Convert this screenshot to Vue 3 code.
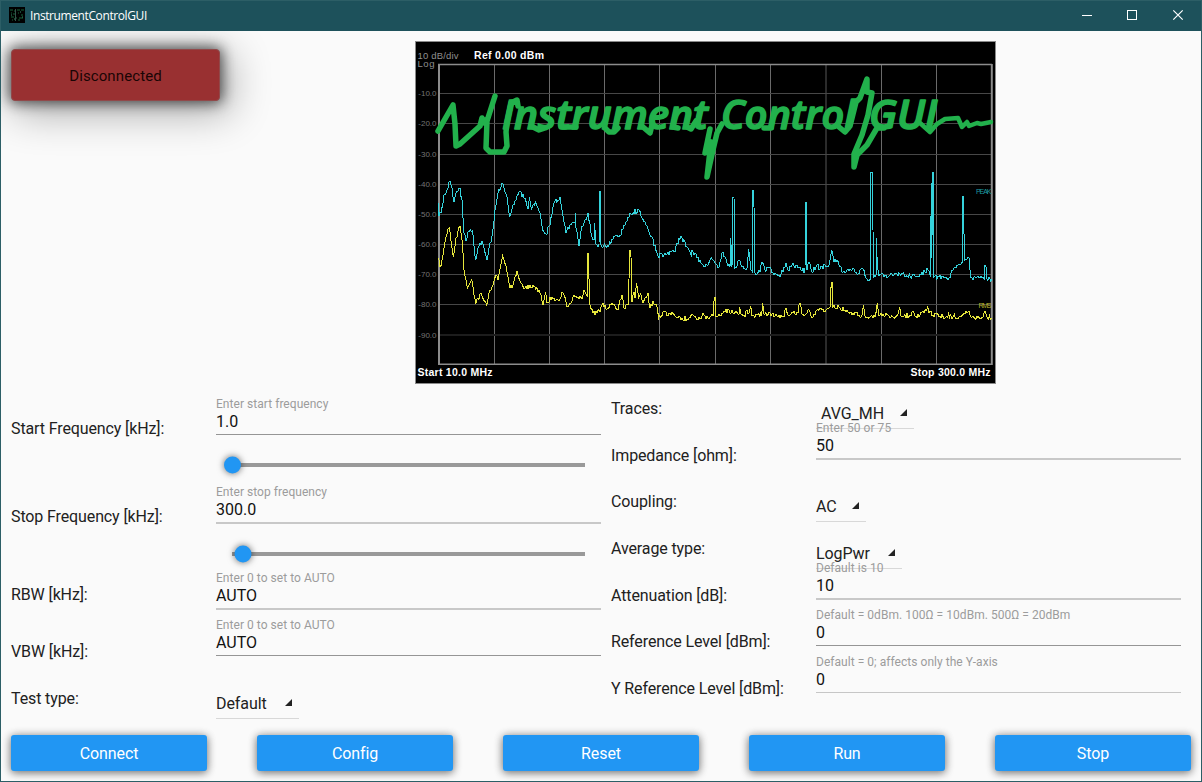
<script setup>
const verticals = [494.5, 549.5, 604.5, 659.5, 715.5, 770.5, 826, 881.5, 936.5]
const horizontals = [93.5, 123.5, 154.5, 184.5, 214.5, 244.5, 274.5, 304.5, 335]

const peak = `438,203 439,216 441,213 444,195 446,193 450,181 452,188 454,202 456.5,192 460,188 462,200 464,233 466,241 468,232 472.5,231 475.5,260 479,246 482,241 484.5,251 487,260 490,243 492,236 495,210 498.5,190 502,183 506.5,195 509.5,216 513,205 520,192 524,198 528,209 529.5,197 531.5,210 535.5,202 540,213 542.5,230 546,234 550,225 554,203 560,197 562.5,212 566,233 570,225 575,223 575.5,213 576,228 579,246 581.5,227 585,220 588,213 591,233 594,240 594.5,223 596,244 599,245 599.5,191 600.6,191 601,245 606.5,247 613,239 620,235 625,225 630,213 639,210 645,222 650,235 655,245 658,256 667,254 675,252 677,243 682,238 687,247 691.5,257 692,250 697,258 703,265 708,265 711.5,258 715,263 718,268 723,252 727,263 730,267 730.7,238 732,267 733,197 734,197 735,268 739,260 742,267 747,268 748.7,249 751,270 752.7,272 753,190 753.8,190 754.3,230 755,273 760,272 762,262 765,270 770,267 773,273 778,276 783,272 786,263 788,270 792,265 800,267 805,272 805.3,202 806.3,202 807,270 809,262 812,272 817,265 820,269 825,265 829,265 831.7,250 834,262 837,260 840,267 843,272 853,268 858,274 863,269 866,278 870.3,279 871,172 872,172 873,230 873.7,277 876,277 876.3,238 877.3,265 879,276 897,274 917,277 925,272 928,270 930.5,277 931.3,183 931.8,258 932.6,172 933.4,172 934,277 950,278 952,270 958,265 962.3,262 963,196 963.7,213 964.4,260 969,258 971,278 980,278 984.3,279 984.7,265 985.9,265 986.7,278 991.7,279`
const rms = `438,258 440,267 442,260 445.7,238 449.3,228 453.3,257 456,238 460,226 462,240 464,270 467.3,288 471.7,280 475.7,304 481,293 486.7,305 490,290 493,285 496.7,275 498,280 502.7,256 506.7,270 510,288 513,285 517,271 520.7,283 525,288 535,287 540,293 543,305 545.7,292 547,303 552,297 558,300 563,293 567,307 573,297 582,299 584,290 587.3,297 587.6,253 588.5,253 589.5,303 593,313 600,312 603,303 607,309 610,304 613,305 618,310 622,295 624,308 628,305 630,250 631,257 632,302 634,292 635,298 636.5,283 638.5,298 640.5,293 643,303 648,293 650,308 653,301 657,307 658.7,318 665,312 668,316 672,312 675,316 687,319 694,316 700,319 703,313 706,319 713,316 714.3,297 715.3,297 716,317 723,313 729,310 733,313 739,314 739.7,307 741,314 745,317 747,310 749,313 750.7,306 752,316 761.7,315 762.7,303 764,314 772,314 778,317 784,317 786,308 788,315 792,312 798,313 799.3,303 800.5,303 802,314 805,315 808,310 811,316 815,315 818,309 825,312 830,307 831.3,282 832.2,282 833,307 840,308 853,313 862,315 863.5,305 865,316 875,317 877.3,303 879,316 896.7,316 899.7,307 901,316 910,315 912,312 915,316 924,313 927.7,306 929,313 940,316 960,316 967,313 969,311 972,317 978,318 983,317 985,311 987,317 991.7,318`

// Interpolates the key points and adds a small repeatable ripple of receiver noise.
function trace(source, seed) {
  const pts = source.split(' ').map((p) => p.split(',').map(Number))
  let s = seed
  const rand = () => {
    s = (s * 16807) % 2147483647
    return s / 2147483647 - 0.5
  }
  const out = []
  pts.forEach(([x, y], i) => {
    out.push(`${x},${y}`)
    const next = pts[i + 1]
    if (!next) return
    const n = Math.floor((next[0] - x) / 0.95)
    for (let k = 1; k < n; k++) {
      const t = k / n
      out.push(`${(x + (next[0] - x) * t).toFixed(1)},${(y + (next[1] - y) * t + rand() * 5).toFixed(1)}`)
    }
  })
  return out.join(' ')
}
const peakTrace = trace(peak, 917)
const rmsTrace = trace(rms, 4211)

const leftRows = [
  { id: 'start', label: 'Start Frequency [kHz]:', hint: 'Enter start frequency', value: '1.0', line: 'dark', slider: 'at-min' },
  { id: 'stop', label: 'Stop Frequency [kHz]:', hint: 'Enter stop frequency', value: '300.0', line: 'wide', slider: 'at-low' },
  { id: 'rbw', label: 'RBW [kHz]:', hint: 'Enter 0 to set to AUTO', value: 'AUTO', line: 'wide' },
  { id: 'vbw', label: 'VBW [kHz]:', hint: 'Enter 0 to set to AUTO', value: 'AUTO', line: 'dark' },
  { id: 'test', label: 'Test type:', option: 'Default' },
]
const rightRows = [
  { id: 'traces', label: 'Traces:', option: 'AVG_MH' },
  { id: 'imp', label: 'Impedance [ohm]:', hint: 'Enter 50 or 75', value: '50', line: 'wide' },
  { id: 'coup', label: 'Coupling:', option: 'AC' },
  { id: 'avg', label: 'Average type:', option: 'LogPwr' },
  { id: 'att', label: 'Attenuation [dB]:', hint: 'Default is 10', value: '10', line: 'wide' },
  { id: 'ref', label: 'Reference Level [dBm]:', hint: 'Default = 0dBm. 100Ω = 10dBm. 500Ω = 20dBm', value: '0', line: 'dark' },
  { id: 'yref', label: 'Y Reference Level [dBm]:', hint: 'Default = 0; affects only the Y-axis', value: '0', line: 'light' },
]
const columns = [
  { side: 'left', rows: leftRows },
  { side: 'right', rows: rightRows },
]
const actions = ['Connect', 'Config', 'Reset', 'Run', 'Stop']
</script>

<template>
  <div class="window">
    <header class="titlebar">
      <svg class="app-icon" viewBox="0 0 16 16">
        <rect width="16" height="16" fill="#000" />
        <path d="M1 3h3M5 4h2M8 3h3M12 3h3M2 6h1M4 7h2M9 6h1M12 8h2M2 10h3M7 11h1M10 11h4M3 13h1M9 13h2" stroke="#17653a" fill="none" />
        <path d="M6.500 2v12" stroke="#35524a" fill="none" />
        <path d="M2 8h1M11 5h1M5 12h1M13 10h1" stroke="#38896b" />
      </svg>
      <span class="title">InstrumentControlGUI</span>
      <svg class="controls" viewBox="0 0 138 30" fill="none" stroke="#fff">
        <path d="M18 15.500h10" />
        <rect x="63.500" y="10.500" width="9" height="9" />
        <path d="M109.300 10.300l9.400 9.400M118.700 10.300l-9.400 9.400" stroke-width="1.200" />
      </svg>
    </header>

    <section class="top">
      <button class="status">Disconnected</button>
      <svg class="screen" viewBox="415 41 581 343">
        <rect x="415.500" y="41.500" width="580" height="342" fill="#000" stroke="#8a8a8a" />
        <g stroke="#6a6a6a">
          <path v-for="x in verticals" :key="x" :d="`M${x} 65V364`" :class="{ dim: x === 826 }" />
        </g>
        <g stroke="#474747">
          <path v-for="y in horizontals" :key="y" :d="`M440 ${y}H992`" :class="{ faint: y === 335 }" />
        </g>
        <path d="M438 64.500H992" stroke="#8c8c8c" stroke-width="1.500" />
        <path d="M439 64V365M991.800 64V365" stroke="#8c8c8c" stroke-width="2" />
        <path d="M438 364.300H992" stroke="#8c8c8c" stroke-width="1.500" />

        <g class="axis">
          <text x="417.500" y="58.500" textLength="41" class="unit">10 dB/div</text>
          <text x="417.500" y="66.500" textLength="17" class="unit">Log</text>
          <text v-for="(y, i) in horizontals" :key="y" x="436.500" :y="y + 2.7" text-anchor="end">-{{ i + 1 }}0.0</text>
        </g>
        <g class="caption">
          <text x="474" y="59" textLength="70">Ref 0.00 dBm</text>
          <text x="417.500" y="376" textLength="75">Start 10.0 MHz</text>
          <text x="910.500" y="376" textLength="80">Stop 300.0 MHz</text>
        </g>

        <polyline :points="peakTrace" class="trace" stroke="#35d3dc" />
        <polyline :points="rmsTrace" class="trace" stroke="#e6e63c" />
        <text x="976" y="193.500" class="tag" fill="#1f9da3" textLength="15.500">PEAK</text>
        <text x="978.500" y="308" class="tag" fill="#b3b32c" textLength="13">RMS</text>

        <g class="logo">
          <text x="502" y="129" textLength="206" lengthAdjust="spacingAndGlyphs">Instrument</text>
          <text x="721" y="129" textLength="134" lengthAdjust="spacingAndGlyphs">Control</text>
          <text x="869" y="129" textLength="68" lengthAdjust="spacingAndGlyphs">GUI</text>
          <path d="M438 131L453 105L455 124L456 146L460 144L480 126L482 118L484 123L488 118L495 96L487 121L486 148L490 152L504 152L507 146L506 132L507 122L511 103L517 100L518 106" />
          <path d="M533 127L539 130L545 128M561 127H576M605 128L609 132H614L618 128M643 127L650 133L652 125M673 127L678 128M687 127L691 129L696 121" />
          <path d="M710 129L705 153L711 142L707 177L713 150L717 133L722 124" />
          <path d="M764 128H771M839 127L845 132L850 126L856 102L860 98L867 79L867 92L872 93L868 115L862 135L854 154L854 167L857 155L867 145L877 128H884" />
          <path d="M920 123L930 132L937 124L945 119L958 118L962 127L967 122L969 126L977 123L981 124L991 122" class="tail" />
        </g>
      </svg>
    </section>

    <main class="form">
      <div v-for="col in columns" :key="col.side" :class="['column', col.side]">
        <div v-for="row in col.rows" :key="row.id" :class="['row', row.id]">
          <label class="label">{{ row.label }}</label>
          <div v-if="row.option" class="spinner">
            <span>{{ row.option }}</span>
            <svg class="caret" viewBox="0 0 8 8"><path d="M8 0V8H0Z" fill="#222" /></svg>
          </div>
          <div v-else class="field">
            <div class="hint">{{ row.hint }}</div>
            <div :class="['value', row.line]">{{ row.value }}</div>
            <div v-if="row.slider" :class="['slider', row.slider]">
              <div class="knob"></div>
            </div>
          </div>
        </div>
      </div>
    </main>

    <footer class="actions">
      <button v-for="name in actions" :key="name" class="action">{{ name }}</button>
    </footer>
  </div>
</template>

<style>
body {
  margin: 0;
  overflow: hidden;
}
</style>

<style scoped>
.window {
  box-sizing: border-box;
  width: 1202px;
  height: 782px;
  border: 1px solid #2c5e66;
  background: #fafafa;
  color: #212121;
  font: 16px/20px Roboto, sans-serif;
  overflow: hidden;
  display: flex;
  flex-direction: column;
}
.titlebar {
  position: relative;
  z-index: 1;
  flex: none;
  height: 30px;
  display: flex;
  align-items: center;
  background: #1d515b;
}
.app-icon {
  width: 16px;
  height: 16px;
  margin: -2px 0 0 8px;
}
.title {
  margin-left: 5px;
  color: #fff;
  font: 12px/16px "Open Sans", sans-serif;
  letter-spacing: -0.400px;
}
.controls {
  width: 138px;
  height: 30px;
  margin: -2px -1px 0 auto;
}
.top {
  flex: none;
  display: flex;
  align-items: flex-start;
  height: 354px;
}
.status {
  width: 209px;
  height: 52px;
  margin: 18px 0 0 10px;
  padding: 2px 0 0;
  border: 1px solid #91494a;
  border-radius: 4px;
  background: #993031;
  color: #1a0505;
  font: 15px/20px Roboto, sans-serif;
  letter-spacing: 0.100px;
  box-shadow: 0 0 14px 2px rgba(0, 0, 0, 0.65), 6px 8px 40px 4px rgba(0, 0, 0, 0.32);
}
.screen {
  width: 581px;
  height: 343px;
  margin: 10px 0 0 195px;
}
.dim {
  stroke: #2b2b2b;
  stroke-width: 2;
}
.faint {
  stroke: #1d1d1d;
  stroke-width: 2;
}
.axis {
  fill: #747474;
  font: 8px "Liberation Sans", sans-serif;
}
.unit {
  fill: #8f8f8f;
  font-size: 9.500px;
}
.caption {
  fill: #fff;
  font: bold 10.500px "Liberation Sans", sans-serif;
}
.trace {
  fill: none;
  stroke-width: 1;
  shape-rendering: crispEdges;
}
.tag {
  font: 7px "Liberation Sans", sans-serif;
}
.logo text {
  fill: #22b14c;
  stroke: #22b14c;
  stroke-width: 1.600px;
  stroke-linejoin: round;
  font: italic 600 40px "Open Sans", "Noto Sans", sans-serif;
}
.logo path {
  fill: none;
  stroke: #22b14c;
  stroke-width: 5.500;
  stroke-linejoin: round;
  stroke-linecap: round;
}
.logo .tail {
  stroke-width: 4.500;
}
.form {
  flex: none;
  display: flex;
  gap: 10px;
  height: 349px;
  padding-left: 10px;
}
.column.left {
  width: 590px;
  padding-top: 11px;
}
.column.right {
  width: 570px;
}
.row {
  display: grid;
  grid-template-columns: 205px 1fr;
  align-items: start;
}
.label {
  letter-spacing: -0.120px;
}
.right .row {
  height: 46.670px;
}
.right .label {
  padding-top: 14px;
}
.right .field {
  margin-top: -11px;
}
.right .imp .field,
.right .att .field {
  margin-top: -12px;
}
.right .spinner {
  margin-top: 15px;
}
.start {
  height: 88px;
}
.stop {
  height: 86px;
}
.rbw,
.vbw {
  height: 47px;
}
.start .label,
.stop .label {
  padding-top: 23px;
}
.rbw .label {
  padding-top: 15px;
}
.vbw .label,
.test .label {
  padding-top: 25px;
}
.hint {
  padding-top: 1px;
  color: #9c9c9c;
  font-size: 12px;
  line-height: 15px;
  letter-spacing: 0.040px;
  white-space: nowrap;
}
.value {
  height: 22px;
  line-height: 19px;
  color: #111;
  border-bottom: 1px solid #959595;
}
.value.wide {
  border-bottom: 2px solid #c8c8c8;
}
.value.light {
  border-bottom-color: #c6c6c6;
}
.slider {
  height: 4px;
  width: 353px;
  margin: 28px 0 0 16px;
  background: #999;
}
.knob {
  width: 17px;
  height: 17px;
  border-radius: 50%;
  background: #2196f3;
  box-shadow: 0 0 7px rgba(0, 0, 0, 0.6);
  transform: translate(-8px, -6.500px);
}
.slider.at-low {
  margin-top: 27.500px;
}
.at-low .knob {
  transform: translate(2.500px, -6.500px);
}
.spinner {
  display: flex;
  justify-content: space-between;
  align-items: center;
  width: 79px;
  height: 29px;
  padding-right: 7px;
  box-sizing: border-box;
  border-bottom: 1px solid #d8d8d8;
}
.spinner span {
  letter-spacing: -0.060px;
}
.caret {
  width: 7px;
  height: 7px;
  margin-bottom: 3px;
}
.test .spinner {
  width: 83px;
  margin-top: 26px;
}
.traces .spinner {
  width: 98px;
  padding-left: 5px;
}
.right .coup .spinner {
  width: 50px;
}
.right .avg .spinner {
  width: 86px;
}
.actions {
  flex: none;
  display: flex;
  gap: 50px;
  padding: 1px 10px 0;
}
.action {
  width: 196px;
  height: 36px;
  padding: 1px 0 0;
  border: 0;
  border-radius: 3px;
  background: #2196f3;
  color: #fff;
  font: 16px/20px Roboto, sans-serif;
  letter-spacing: -0.100px;
  box-shadow: 0 2px 8px rgba(0, 0, 0, 0.45), 0 0 10px rgba(0, 0, 0, 0.2);
}
</style>
